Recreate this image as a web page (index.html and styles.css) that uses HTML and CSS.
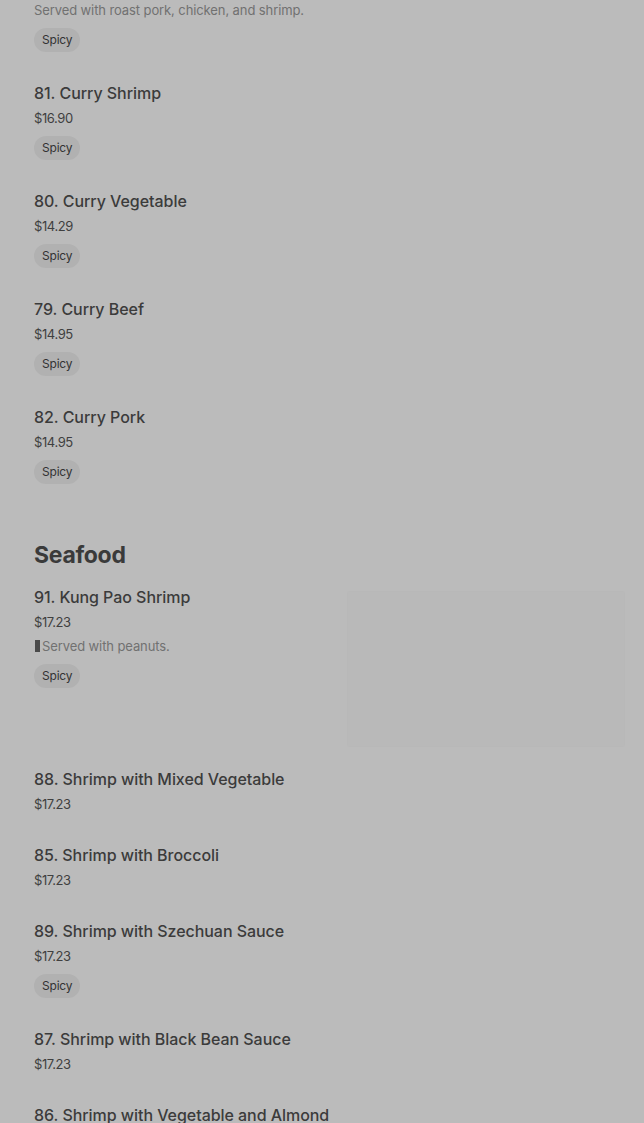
FILE: index.html
```html
<!DOCTYPE html>
<html lang="en">
<head>
<meta charset="utf-8">
<title>Menu</title>
<link rel="stylesheet" href="styles.css">
</head>
<body>
<main class="menu">
  <section class="section">
    <div class="item item-partial">
      <div class="item-text">
        <p class="desc">Served with roast pork, chicken, and shrimp.</p>
        <span class="badge">Spicy</span>
      </div>
    </div>
    <div class="item">
      <div class="item-text">
        <h3 class="title">81. Curry Shrimp</h3>
        <p class="price">$16.90</p>
        <span class="badge">Spicy</span>
      </div>
    </div>
    <div class="item">
      <div class="item-text">
        <h3 class="title">80. Curry Vegetable</h3>
        <p class="price">$14.29</p>
        <span class="badge">Spicy</span>
      </div>
    </div>
    <div class="item">
      <div class="item-text">
        <h3 class="title">79. Curry Beef</h3>
        <p class="price">$14.95</p>
        <span class="badge">Spicy</span>
      </div>
    </div>
    <div class="item">
      <div class="item-text">
        <h3 class="title">82. Curry Pork</h3>
        <p class="price">$14.95</p>
        <span class="badge">Spicy</span>
      </div>
    </div>
  </section>

  <section class="section">
    <h2 class="section-title">Seafood</h2>
    <div class="item item-with-image">
      <div class="item-text">
        <h3 class="title">91. Kung Pao Shrimp</h3>
        <p class="price">$17.23</p>
        <p class="desc"><span class="caret"></span>Served with peanuts.</p>
        <span class="badge">Spicy</span>
      </div>
      <div class="thumb"></div>
    </div>
    <div class="item">
      <div class="item-text">
        <h3 class="title">88. Shrimp with Mixed Vegetable</h3>
        <p class="price">$17.23</p>
      </div>
    </div>
    <div class="item">
      <div class="item-text">
        <h3 class="title">85. Shrimp with Broccoli</h3>
        <p class="price">$17.23</p>
      </div>
    </div>
    <div class="item">
      <div class="item-text">
        <h3 class="title">89. Shrimp with Szechuan Sauce</h3>
        <p class="price">$17.23</p>
        <span class="badge">Spicy</span>
      </div>
    </div>
    <div class="item">
      <div class="item-text">
        <h3 class="title">87. Shrimp with Black Bean Sauce</h3>
        <p class="price">$17.23</p>
      </div>
    </div>
    <div class="item">
      <div class="item-text">
        <h3 class="title">86. Shrimp with Vegetable and Almond</h3>
        <p class="price">$17.23</p>
      </div>
    </div>
  </section>
</main>
</body>
</html>
```

FILE: styles.css
```css
html, body {
  margin: 0;
  padding: 0;
  background: #bbbbbb;
}

body {
  font-family: Inter, "Noto Sans", "Liberation Sans", sans-serif;
  color: #3a3a3a;
  overflow: hidden;
}

.menu {
  padding: 0 20px 0 34px;
}

.section-title {
  margin: 40px 0 0;
  font-size: 23px;
  line-height: 32px;
  font-weight: 700;
  color: #3a3a3a;
  letter-spacing: -0.3px;
}

.item {
  display: flex;
  justify-content: space-between;
  align-items: flex-start;
  padding: 14px 0 15px;
}

.item-partial {
  padding-top: 0;
}

.item-with-image {
  padding-bottom: 0;
}

.item-text {
  display: flex;
  flex-direction: column;
  align-items: flex-start;
}

.title {
  margin: 0;
  font-size: 16px;
  line-height: 24px;
  font-weight: 500;
  color: #3b3b3b;
  letter-spacing: -0.05px;
}

.price {
  margin: 3px 0 0;
  font-size: 13px;
  line-height: 20px;
  font-weight: 400;
  color: #3f3f3f;
  letter-spacing: -0.4px;
}

.desc {
  margin: 4px 0 0;
  font-size: 13px;
  line-height: 20px;
  color: #717171;
  display: flex;
  align-items: center;
  letter-spacing: -0.1px;
}

.item-partial .desc {
  margin-top: 0;
}

.caret {
  display: inline-block;
  width: 5px;
  height: 12px;
  background: #4a4a4a;
  margin: 0 2px 0 1px;
}

.badge {
  margin-top: 8px;
  height: 24px;
  line-height: 24px;
  padding: 0 8px;
  border-radius: 12px;
  background: #b1b1b1;
  font-size: 12px;
  font-weight: 400;
  color: #333333;
  letter-spacing: -0.2px;
}

.thumb {
  width: 276px;
  height: 154px;
  margin: 7px 0 7px;
  background: #b9b9b9;
  box-shadow: 0 0 2px rgba(0, 0, 0, 0.05);
  flex: none;
}
```
